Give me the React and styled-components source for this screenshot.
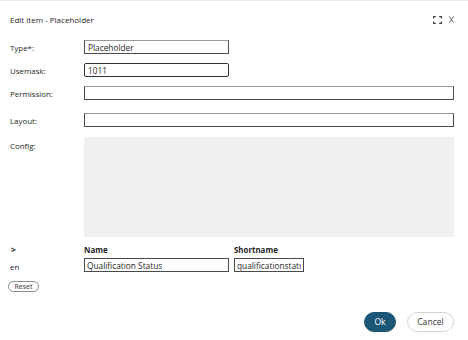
import styled, { createGlobalStyle } from "styled-components";

const GlobalStyle = createGlobalStyle`
  html, body {
    margin: 0;
    padding: 0;
    background: #fff;
  }
  * {
    box-sizing: border-box;
  }
`;

const Dialog = styled.div`
  width: 468px;
  height: 340px;
  background: #fff;
  border-top: 1px solid #ececec;
  font-family: "Open Sans", "Noto Sans", sans-serif;
  font-size: 7.9px;
  color: #262626;
  display: flex;
  flex-direction: column;
  padding: 0 14px 0 10px;
`;

const Header = styled.div`
  height: 38px;
  display: flex;
  align-items: center;
  justify-content: space-between;
  padding-bottom: 1px;
`;

const Title = styled.span`
  font-size: 8px;
  color: #262626;
`;

const HeaderTools = styled.div`
  display: flex;
  align-items: center;
  gap: 7px;
  color: #555;
`;

const IconButton = styled.span`
  display: flex;
  align-items: center;
  cursor: pointer;
`;

const Row = styled.div`
  display: grid;
  grid-template-columns: 74px 1fr;
  align-items: center;
  margin-top: ${(p) => p.$gap || 0}px;
`;

const Label = styled.label`
  padding-top: ${(p) => p.$pad || 3}px;
  align-self: start;
`;

const TextInput = styled.input`
  height: 14px;
  width: ${(p) => (p.$wide ? "370px" : "145px")};
  border: 1px solid #4a4a4a;
  border-top-color: #9a9a9a;
  border-radius: 0;
  padding: 0 3px;
  font-family: inherit;
  font-size: 8.3px;
  color: #1e1e1e;
  outline: none;
  background: #fff;
  ${(p) =>
    p.$focused &&
    `
    border: 1.4px solid #333;
    border-radius: 2px;
  `}
`;

const ConfigArea = styled.div`
  width: 370px;
  height: 100px;
  background: #f0f0f0;
`;

const LangGrid = styled.div`
  display: grid;
  grid-template-columns: 69px 145px 70px;
  column-gap: 5px;
  row-gap: 3px;
  margin-top: 7px;
  align-items: center;
`;

const Chevron = styled.span`
  font-weight: 700;
  font-size: 8.5px;
  padding-left: 1px;
`;

const ColHead = styled.span`
  font-weight: 700;
  color: #1e1e1e;
`;

const Lang = styled.span`
  padding-top: 3px;
`;

const SmallInput = styled(TextInput)`
  width: 100%;
  border: 1px solid #4a4a4a;
  border-top-color: #4a4a4a;
  padding: 0 2px;
`;

const ResetButton = styled.button`
  margin-top: 9px;
  margin-left: -2px;
  width: 31px;
  height: 11px;
  padding: 0;
  border: 1px solid #8a8a8a;
  border-radius: 6px;
  background: #fff;
  font-family: inherit;
  font-size: 7px;
  color: #333;
  line-height: 9px;
`;

const Footer = styled.div`
  margin-top: auto;
  margin-bottom: 8px;
  display: flex;
  justify-content: flex-end;
  gap: 11px;
`;

const Button = styled.button`
  height: 20px;
  width: ${(p) => p.$w}px;
  border-radius: 10px;
  font-family: inherit;
  font-size: 8.6px;
  padding: 0;
  cursor: pointer;
  border: 1px solid ${(p) => (p.$primary ? "#1b5676" : "#d4d4d4")};
  background: ${(p) => (p.$primary ? "#1b5676" : "#fff")};
  color: ${(p) => (p.$primary ? "#fff" : "#333")};
`;

const MaximizeIcon = () => (
  <svg width="9" height="8" viewBox="0 0 9 8" fill="none" stroke="#444" strokeWidth="1.2">
    <path d="M0.6 2.6V0.6H2.8M6.2 0.6H8.4V2.6M8.4 5.4V7.4H6.2M2.8 7.4H0.6V5.4" />
  </svg>
);

const CloseIcon = () => (
  <svg width="5" height="7" viewBox="0 0 5 7" fill="none" stroke="#555" strokeWidth="0.9">
    <path d="M0.4 0.4L4.6 6.6M4.6 0.4L0.4 6.6" />
  </svg>
);

export default function App() {
  return (
    <>
      <GlobalStyle />
      <Dialog>
        <Header>
          <Title>Edit item - Placeholder</Title>
          <HeaderTools>
            <IconButton>
              <MaximizeIcon />
            </IconButton>
            <IconButton>
              <CloseIcon />
            </IconButton>
          </HeaderTools>
        </Header>

        <Row $gap={1}>
          <Label>Type*:</Label>
          <TextInput defaultValue="Placeholder" />
        </Row>
        <Row $gap={9}>
          <Label>Usemask:</Label>
          <TextInput defaultValue="1011" $focused />
        </Row>
        <Row $gap={9}>
          <Label>Permission:</Label>
          <TextInput $wide />
        </Row>
        <Row $gap={13}>
          <Label>Layout:</Label>
          <TextInput $wide />
        </Row>
        <Row $gap={10}>
          <Label $pad={4}>Config:</Label>
          <ConfigArea />
        </Row>

        <LangGrid>
          <Chevron>&gt;</Chevron>
          <ColHead>Name</ColHead>
          <ColHead>Shortname</ColHead>
          <Lang>en</Lang>
          <SmallInput defaultValue="Qualification Status" />
          <SmallInput defaultValue="qualificationstatus" />
        </LangGrid>
        <div>
          <ResetButton>Reset</ResetButton>
        </div>

        <Footer>
          <Button $primary $w={32}>Ok</Button>
          <Button $w={47}>Cancel</Button>
        </Footer>
      </Dialog>
    </>
  );
}
